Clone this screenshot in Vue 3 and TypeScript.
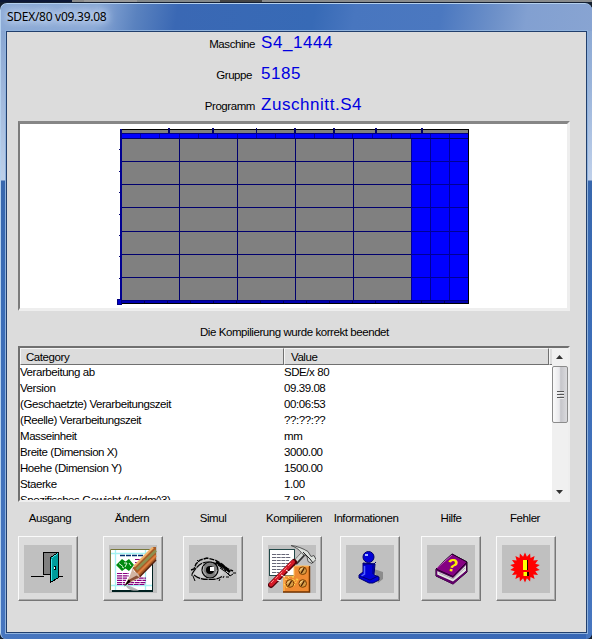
<script setup lang="ts">
interface Field { label: string; value: string; pad: number }
interface Row { category: string; value: string }
interface Tool { id: string; label: string; gap: number; shift: number }

const fields: Field[] = [
  { label: 'Maschine', value: 'S4_1444', pad: 6 },
  { label: 'Gruppe', value: '5185', pad: 9 },
  { label: 'Programm', value: 'Zuschnitt.S4', pad: 6 },
]

const rows: Row[] = [
  { category: 'Verarbeitung ab', value: 'SDE/x 80' },
  { category: 'Version', value: '09.39.08' },
  { category: '(Geschaetzte) Verarbeitungszeit', value: '00:06:53' },
  { category: '(Reelle) Verarbeitungszeit', value: '??:??:??' },
  { category: 'Masseinheit', value: 'mm' },
  { category: 'Breite (Dimension X)', value: '3000.00' },
  { category: 'Hoehe (Dimension Y)', value: '1500.00' },
  { category: 'Staerke', value: '1.00' },
  { category: 'Spezifisches Gewicht (kg/dm^3)', value: '7.80' },
]

const tools: Tool[] = [
  { id: 'exit', label: 'Ausgang', gap: 0, shift: 2 },
  { id: 'edit', label: 'Ändern', gap: 25, shift: -1 },
  { id: 'simulate', label: 'Simul', gap: 20, shift: 0 },
  { id: 'compile', label: 'Kompilieren', gap: 19, shift: 2 },
  { id: 'info', label: 'Informationen', gap: 18, shift: -4 },
  { id: 'help', label: 'Hilfe', gap: 21, shift: 0 },
  { id: 'error', label: 'Fehler', gap: 15, shift: -1 },
]

// Sheet layout, in panel coordinates
const rowLines = [37, 60, 83, 107, 130, 153]
const colLines = [159, 217, 275, 333]
const scrapLines = [391, 410, 429]
const topTicks = [[148, 2], [192, 2], [236, 1], [274, 2], [313, 2], [355, 2], [401, 2]]
const leftTicks = [25, 47, 68, 90, 111, 132, 154]
const stripTicks = Array.from({ length: 17 }, (_, i) => 120 + Math.round(i * 19.3))
const footTicks = Array.from({ length: 14 }, (_, i) => 124 + Math.round(i * 23.1))

const burst = Array.from({ length: 36 }, (_, i) => {
  const r = i % 2 === 0 ? 15 : 11
  const a = (i * Math.PI) / 18 - Math.PI / 2
  return `${(23 + r * Math.cos(a)).toFixed(1)},${(22.5 + r * Math.sin(a)).toFixed(1)}`
}).join(' ')
</script>

<template>
  <div class="screen">
    <div class="behind"></div>
    <div class="window">
      <header class="titlebar"><span class="title">SDEX/80 v09.39.08</span></header>
      <main class="client">
        <section class="fields">
          <div v-for="f in fields" :key="f.label" class="field">
            <span class="field-label" :style="{ paddingRight: f.pad + 'px' }">{{ f.label }}</span>
            <span class="field-value">{{ f.value }}</span>
          </div>
        </section>

        <section class="preview">
          <svg width="546" height="184" viewBox="0 0 546 184" shape-rendering="crispEdges">
            <rect x="100" y="5" width="349" height="175" fill="#000" />
            <rect x="102" y="6" width="346" height="3" fill="#808080" />
            <rect x="101" y="9" width="347" height="6" fill="#0000ff" />
            <rect x="101" y="9" width="347" height="1" fill="#000080" />
            <rect x="101" y="14" width="347" height="1" fill="#000070" />
            <rect v-for="x in stripTicks" :key="'s' + x" :x="x" y="10" width="1" height="4" fill="#0000a0" />
            <rect x="102" y="15" width="289" height="161" fill="#808080" />
            <rect x="391" y="15" width="57" height="161" fill="#0000ff" />
            <g fill="#00006e">
              <rect v-for="y in rowLines" :key="'r' + y" x="101" :y="y" width="347" height="1" />
              <rect v-for="x in colLines" :key="'c' + x" :x="x" y="15" width="1" height="161" />
            </g>
            <g fill="#000096">
              <rect v-for="x in scrapLines" :key="'b' + x" :x="x" y="15" width="1" height="161" />
              <rect v-for="y in rowLines" :key="'q' + y" x="392" :y="y" width="56" height="1" />
            </g>
            <rect x="101" y="176" width="347" height="3" fill="#0000ae" />
            <rect x="101" y="176" width="347" height="1" fill="#000080" />
            <rect v-for="x in footTicks" :key="'f' + x" :x="x" y="177" width="1" height="2" fill="#000060" />
            <g fill="#000070">
              <rect v-for="t in topTicks" :key="'t' + t[0]" :x="t[0]" y="4" :width="t[1]" height="5" />
              <rect v-for="y in leftTicks" :key="'l' + y" x="99" :y="y" width="1" height="1" />
            </g>
            <rect x="100" y="5" width="2" height="174" fill="#000090" />
            <rect x="97" y="175" width="5" height="6" fill="#000080" />
            <rect x="98" y="176" width="3" height="4" fill="#0000c8" />
          </svg>
        </section>

        <p class="status">Die Kompilierung wurde korrekt beendet</p>

        <section class="list">
          <div class="table">
            <div class="head">
              <span class="th cat">Category</span>
              <span class="th val">Value</span>
              <span class="th rest"></span>
            </div>
            <div v-for="r in rows" :key="r.category" class="row">
              <span class="cell">{{ r.category }}</span>
              <span>{{ r.value }}</span>
            </div>
          </div>
          <div class="scroll">
            <svg class="arrow" width="16" height="18" viewBox="0 0 16 18"><path d="M4 11l3.500-4 3.500 4z" fill="#333" /></svg>
            <div class="thumb"><i></i><i></i><i></i></div>
            <svg class="arrow down" width="16" height="18" viewBox="0 0 16 18"><path d="M4 8h7l-3.500 4z" fill="#333" /></svg>
          </div>
        </section>

        <nav class="tools">
          <div v-for="t in tools" :key="t.id" class="tool" :style="{ marginLeft: t.gap + 'px' }">
            <span class="tool-label" :style="{ transform: `translateX(${t.shift}px)` }">{{ t.label }}</span>
            <button class="btn" type="button">
              <svg width="48" height="48" viewBox="0 0 48 48">
                <g v-if="t.id === 'exit'" shape-rendering="crispEdges">
                  <path d="M7 31.500h13M34 31.500h5" stroke="#000" />
                  <path d="M19.500 29.500V7.500h15v4" fill="none" stroke="#000" />
                  <path d="M20 8h13L27 13v16h-7z" fill="#808080" />
                  <path d="M20 29.500h6" stroke="#000" />
                  <path d="M26.500 12.500l8-5v25l-8 5z" fill="#009c9c" stroke="#000" />
                  <path d="M27.500 14v22" stroke="#40e8e8" />
                  <path d="M28 12.500l6-4" stroke="#40e8e8" />
                  <rect x="30" y="21" width="2" height="4" fill="#000" />
                  <rect x="30" y="22" width="1" height="2" fill="#fff" />
                </g>

                <g v-else-if="t.id === 'edit'">
                  <rect x="3" y="6" width="41" height="41" fill="#002020" />
                  <rect x="1" y="4" width="42" height="41" fill="#fff" />
                  <path d="M1.500 45V4.500H43" fill="none" stroke="#77773a" />
                  <path d="M6.500 5v40M36.500 5v40M2 8.500h41M2 40.500h41" stroke="#a4f2f2" stroke-width="1.300" />
                  <path d="M11 10.500h23" stroke="#003070" stroke-width="1.500" stroke-dasharray="5 1" />
                  <path d="M7 20l6-6 3.500 2.500L20 14l5 6-5 6-3.500-2.500L13 26z" fill="#008a10" />
                  <path d="M10 18.500l4 3M15 18h3l-2 4M20 18l2 3M13 22l2 1" stroke="#d8f5d8" fill="none" />
                  <path d="M26 14.500h12M26 17.500h10M26 20.500h8M26 23.500h6M8 28.500h12M8 30.800h12M8 33.100h10M8 35.400h9M8 37.700h8M8 39.500h8M24 33.100h13M22 35.400h15M20 37.700h17M19 39.500h17" stroke="#86007f" stroke-width="1.200" stroke-dasharray="5 .7" />
                  <path d="M17 40.500c4 0 8 2 13 5-7 1-12-1-13-5z" fill="#aaa" opacity=".85" />
                  <path d="M23.500 23L44.500 2H47v13L30.500 32z" fill="#a85b25" />
                  <path d="M25 21.500L44 2.500" stroke="#efb16b" stroke-width="2.200" />
                  <path d="M27.500 24.500L47 5.500" stroke="#8d9050" stroke-width="2.600" />
                  <path d="M29 28.500L47 10.500" stroke="#df8040" stroke-width="2.200" />
                  <path d="M30.500 32L47 15" stroke="#542010" stroke-width="1.500" />
                  <path d="M23.500 22.500c-1 6-4 11-8 18 6-3 11-5 15.500-8l-2-4-4-2z" fill="#d2b5a2" />
                  <path d="M17.500 38l13-5.500-3-2-8 4.500z" fill="#8a5036" />
                  <path d="M19.500 34.500c1 .5 2 1.500 2 2.500L15 41.500z" fill="#100000" />
                </g>

                <g v-else-if="t.id === 'simulate'" fill="none" stroke="#000">
                  <path d="M4 30c4-7 9-12 15-12 7 0 12 5 16 10-4 4-11 6-17 5-6-.5-10-1-14-3z" fill="#d0d0d0" stroke="none" />
                  <path d="M3 29c5-8 9-12 16-12 8 0 13 5 18 9M5 30c5 4 10 4.500 16 4.500 6 0 9-1 12-3" stroke-width="1.200" stroke-dasharray="7 .8" />
                  <path d="M2 25l3-1 2-5 4-4 7-2 8 2 7 4 6 5 5 2" stroke-width="1.400" stroke-dasharray="5 1" />
                  <path d="M27 17l8 5 6 5" stroke-width="2.600" />
                  <path d="M31 23l6 4 4 4 3-2M2 30h2M4 31l2 5M44 28h3M30 36l1-2M34 33l1-2M37 32l3 0M39 28l2 3M10 17l-2-2" />
                  <circle cx="21" cy="25" r="8" fill="#808080" stroke-width="1.200" />
                  <path d="M15 21l-1 5 3 4M26 29l2-4" stroke="#b8b8b8" />
                  <circle cx="21" cy="25" r="4" fill="#000" stroke="none" />
                  <rect x="21" y="22" width="4" height="4" fill="#fff" stroke="none" />
                </g>

                <g v-else-if="t.id === 'compile'">
                  <rect x="1" y="4" width="26" height="27" fill="#204848" />
                  <rect x="2" y="5" width="24" height="25" fill="#fff" />
                  <path d="M4 9.500h17M4 12.500h19M4 15.500h17M4 18.500h19M4 21.500h14M4 24.500h10M4 27.500h7" stroke="#667" stroke-dasharray="4 .7" />
                  <path d="M26 21h16v26H15V31h11z" fill="#ef8b32" />
                  <path d="M41.500 21v26H15" fill="none" stroke="#743500" stroke-width="1.500" />
                  <path d="M16 46V31h10V21h15" fill="none" stroke="#ffc565" />
                  <path d="M17 34l8 3 5-4M20 32l5 5M25 31v8M30 34l-5 8M16 39l3 4" stroke="#ffe050" fill="none" stroke-dasharray="2 1" />
                  <g v-for="(s, i) in [[34.7, 25.7], [22, 38.5], [34.7, 38.5]]" :key="i">
                    <circle :cx="s[0]" :cy="s[1]" r="3.800" fill="#d69c46" stroke="#7b3f00" stroke-width="1" />
                    <path :d="`M${s[0] - 1.5} ${s[1] + 2.5}l3-5`" stroke="#431f00" stroke-width="1.300" />
                    <path :d="`M${s[0] - 3} ${s[1]}l3-3`" stroke="#ffe2a0" />
                  </g>
                  <path d="M27 18L38 6" stroke="#333" stroke-width="5" />
                  <path d="M26.500 17.500L38 5" stroke="#d4d8d5" stroke-width="3" />
                  <path d="M3 40L26 17" stroke="#520008" stroke-width="6" stroke-linecap="round" />
                  <path d="M3 39.500L25 17" stroke="#d51a28" stroke-width="4" stroke-linecap="round" />
                  <path d="M3 38L24 17" stroke="#ff8b8b" stroke-dasharray="4 2" />
                  <path d="M9 35l4 1M13 30l4 2M18 25l3 2" stroke="#fff" />
                  <path d="M23 .5c6 .5 12 3 17 6l3 5 3-1 2 4-4 4-4-2-1-5-5-3C31 4 27 2 23 .5z" fill="#dce0dc" stroke="#555" />
                  <path d="M35 7l7 7 3 4" fill="none" stroke="#222" />
                </g>

                <g v-else-if="t.id === 'info'">
                  <path d="M28 24l9 3v7l-5 4z" fill="#8c8c8c" />
                  <path d="M17 18l12 1-1 11 5 2v3l-6 3h-4l-10-5v-3l4-3z" fill="#0000d8" stroke="#00006c" />
                  <path d="M17 19h11l2-2M14 31l10 4 8-4M27 20v9" fill="none" stroke="#000070" />
                  <path d="M18.500 21v8l-3 2" fill="none" stroke="#5264ff" stroke-width="1.500" />
                  <circle cx="22.500" cy="12" r="5.500" fill="#0000d8" stroke="#00006c" />
                  <rect x="19" y="9" width="3" height="2" fill="#a8b8ff" />
                </g>

                <g v-else-if="t.id === 'help'">
                  <path d="M9 24L25 9l15 8v10L26 39 9 31z" fill="#56005d" stroke="#17001b" />
                  <path d="M10 26l16 7 13-13v6L26 36.500 10 29.500z" fill="#e3e3e3" />
                  <path d="M12 28l14 6 12-11" fill="none" stroke="#aaa" />
                  <path d="M9 24L25 9l15 8-14 14.500z" fill="#850082" stroke="#25002a" />
                  <path d="M10 23L25 10" stroke="#c763c6" />
                  <path d="M9.500 24.500v6L26 38.500 40 26" fill="none" stroke="#62006a" stroke-width="1.500" />
                  <text class="question" x="20" y="26.500" transform="rotate(12 25 20)">?</text>
                </g>

                <g v-else>
                  <polygon :points="burst" fill="#ff0000" />
                  <path d="M23 15h3v10h-3zM23 27h4v4h-4z" fill="#210000" />
                  <path d="M21 15h4v10h-4zM21.500 27H25v4h-3.500z" fill="#ffff00" />
                </g>
              </svg>
            </button>
          </div>
        </nav>
      </main>
    </div>
  </div>
</template>

<style>
body { margin: 0; }
</style>

<style scoped>
* { box-sizing: border-box; }
.screen {
  width: 592px;
  height: 639px;
  background: #15202f;
  overflow: hidden;
  font-family: "Liberation Sans", Arial, sans-serif;
  font-size: 11.5px;
  letter-spacing: -0.43px;
  color: #000;
  white-space: nowrap;
}
.behind {
  height: 3px;
  border-bottom: 1px solid #152033;
  background: linear-gradient(90deg, #0c1736 0 72px, #8b8b8b 72px 84px, #999 84px 137px, #83888a 137px 220px, #444 220px 262px, #898b8c 262px);
}
.window {
  height: 636px;
  display: flex;
  flex-direction: column;
  padding: 0 5px 6px 5px;
  border: 1px solid #b4d0ee;
  border-width: 1px 0 0 1px;
  border-radius: 7px 7px 6px 6px;
  background:
    linear-gradient(180deg, #7f9fcd 0, #9cb5da 80px, #bdd0e9 176px, #3867ad 177px, #3b6db7 300px, #4776bf) left / 6px 100% no-repeat,
    linear-gradient(180deg, #87a5d1 0, #9ab4da 80px, #bfd0ea 176px, #3867ad 177px, #3b6db7 300px, #4776bf) right / 6px 100% no-repeat,
    linear-gradient(90deg, #4776bf, #3767b5);
}
.titlebar {
  height: 27px;
  margin: 0 -5px;
  padding: 4px 0 0 6px;
  border-radius: 6px 6px 0 0;
  background: linear-gradient(100deg, #8caad6 0, #8ba9d7 95px, #5a82bf 135px, #3a68b4 175px, #376ab6 310px, #4876bf 350px, #4b78c0 435px, #6e91c9 490px, #82a0d1 520px, #88a4d2);
}
.title {
  display: inline-block;
  font: 12px/17px "Noto Sans", "Open Sans", sans-serif;
  letter-spacing: -0.28px;
  text-shadow: 0 0 7px #d9e5f7, 0 0 10px #d9e5f7, 0 0 12px #c9daf2;
}
.client {
  flex: 1;
  min-height: 0;
  display: flex;
  flex-direction: column;
  padding: 0 16px 0 11px;
  background: #dcdcdc;
  border: 1px solid #213f6d;
  outline: 1px solid #8fb2dd;
  outline-offset: 0;
}
.fields { height: 89px; }
.field {
  height: 31px;
  display: flex;
  align-items: baseline;
}
.field-label {
  width: 243px;
  text-align: right;
}
.field-value {
  color: #0000e0;
  font-size: 17px;
  line-height: 22px;
  letter-spacing: 0.55px;
}
.preview {
  height: 190px;
  background: #fff;
  border-style: solid;
  border-width: 3px 3px 3px 2px;
  border-color: #868686 #eeeeee #eeeeee #7c7c7c;
}
.preview svg { display: block; }
.status {
  margin: 0 0 0 182px;
  height: 35px;
  line-height: 42px;
}
.list {
  height: 156px;
  display: flex;
  background: #fff;
  border: 2px solid #707070;
  border-right-color: #eee;
  border-bottom-color: #eee;
  overflow: hidden;
}
.table { flex: 1; min-width: 0; }
.head {
  display: flex;
  height: 17px;
  background: #dcdcdc;
}
.th {
  border: 1px solid #707070;
  border-top-color: #f5f5f5;
  border-left-color: #f5f5f5;
  line-height: 17px;
  padding-left: 6px;
}
.cat { width: 264px; padding-left: 5px; }
.val { width: 265px; }
.rest { flex: 1; padding: 0; border-right: 0; }
.row {
  display: flex;
  height: 16px;
  line-height: 15px;
}
.cell { width: 264px; }
.scroll {
  width: 16px;
  display: flex;
  flex-direction: column;
  background: #f0f0f0;
}
.arrow { display: block; }
.down { margin-top: auto; }
.thumb {
  height: 57px;
  display: flex;
  flex-direction: column;
  justify-content: center;
  align-items: center;
  gap: 2px;
  border: 1px solid #8b8b8b;
  border-radius: 2px;
  background: linear-gradient(90deg, #fafafa, #e9e9ec 45%, #c5c5ca 55%, #dadadd);
}
.thumb i { width: 7px; height: 1px; background: #555; box-shadow: 0 1px #eee; }
.tools {
  display: flex;
  padding-top: 8px;
}
.tool {
  width: 60px;
  display: flex;
  flex-direction: column;
  align-items: center;
}
.tool-label { height: 26px; line-height: 17px; }
.btn {
  width: 60px;
  height: 65px;
  padding: 7px 5px;
  border: 1px solid #fafafa;
  border-right: 1px solid #777;
  border-bottom: 1px solid #777;
  border-radius: 0;
  background: #dcdcdc;
  box-shadow: inset -1px -1px #aaa;
}
.btn svg { display: block; background: #c0c0c0; }
.question {
  font: bold 18px "Liberation Sans", Arial, sans-serif;
  fill: #ffee00;
}
</style>
